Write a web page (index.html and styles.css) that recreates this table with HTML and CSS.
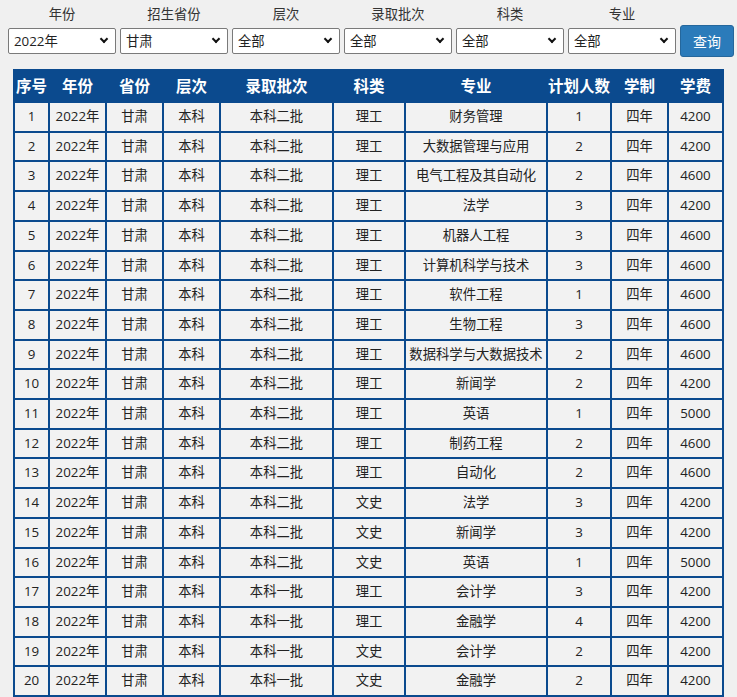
FILE: index.html
```html
<!DOCTYPE html>
<html lang="zh-CN">
<head>
<meta charset="utf-8">
<title>招生计划查询</title>
<link rel="stylesheet" href="styles.css">
</head>
<body>
<div class="filters">
  <div class="field"><label class="lbl">年份</label><span class="sel"><select><option>2022年</option></select></span></div>
  <div class="field"><label class="lbl">招生省份</label><span class="sel"><select><option>甘肃</option></select></span></div>
  <div class="field"><label class="lbl">层次</label><span class="sel"><select><option>全部</option></select></span></div>
  <div class="field"><label class="lbl">录取批次</label><span class="sel"><select><option>全部</option></select></span></div>
  <div class="field"><label class="lbl">科类</label><span class="sel"><select><option>全部</option></select></span></div>
  <div class="field"><label class="lbl">专业</label><span class="sel"><select><option>全部</option></select></span></div>
  <button class="btn">查询</button>
</div>
<table class="plan">
  <thead>
    <tr><th>序号</th><th>年份</th><th>省份</th><th>层次</th><th>录取批次</th><th>科类</th><th>专业</th><th>计划人数</th><th>学制</th><th>学费</th></tr>
  </thead>
  <tbody>
    <tr><td>1</td><td>2022年</td><td>甘肃</td><td>本科</td><td>本科二批</td><td>理工</td><td>财务管理</td><td>1</td><td>四年</td><td>4200</td></tr>
    <tr><td>2</td><td>2022年</td><td>甘肃</td><td>本科</td><td>本科二批</td><td>理工</td><td>大数据管理与应用</td><td>2</td><td>四年</td><td>4200</td></tr>
    <tr><td>3</td><td>2022年</td><td>甘肃</td><td>本科</td><td>本科二批</td><td>理工</td><td>电气工程及其自动化</td><td>2</td><td>四年</td><td>4600</td></tr>
    <tr><td>4</td><td>2022年</td><td>甘肃</td><td>本科</td><td>本科二批</td><td>理工</td><td>法学</td><td>3</td><td>四年</td><td>4200</td></tr>
    <tr><td>5</td><td>2022年</td><td>甘肃</td><td>本科</td><td>本科二批</td><td>理工</td><td>机器人工程</td><td>3</td><td>四年</td><td>4600</td></tr>
    <tr><td>6</td><td>2022年</td><td>甘肃</td><td>本科</td><td>本科二批</td><td>理工</td><td>计算机科学与技术</td><td>3</td><td>四年</td><td>4600</td></tr>
    <tr><td>7</td><td>2022年</td><td>甘肃</td><td>本科</td><td>本科二批</td><td>理工</td><td>软件工程</td><td>1</td><td>四年</td><td>4600</td></tr>
    <tr><td>8</td><td>2022年</td><td>甘肃</td><td>本科</td><td>本科二批</td><td>理工</td><td>生物工程</td><td>3</td><td>四年</td><td>4600</td></tr>
    <tr><td>9</td><td>2022年</td><td>甘肃</td><td>本科</td><td>本科二批</td><td>理工</td><td>数据科学与大数据技术</td><td>2</td><td>四年</td><td>4600</td></tr>
    <tr><td>10</td><td>2022年</td><td>甘肃</td><td>本科</td><td>本科二批</td><td>理工</td><td>新闻学</td><td>2</td><td>四年</td><td>4200</td></tr>
    <tr><td>11</td><td>2022年</td><td>甘肃</td><td>本科</td><td>本科二批</td><td>理工</td><td>英语</td><td>1</td><td>四年</td><td>5000</td></tr>
    <tr><td>12</td><td>2022年</td><td>甘肃</td><td>本科</td><td>本科二批</td><td>理工</td><td>制药工程</td><td>2</td><td>四年</td><td>4600</td></tr>
    <tr><td>13</td><td>2022年</td><td>甘肃</td><td>本科</td><td>本科二批</td><td>理工</td><td>自动化</td><td>2</td><td>四年</td><td>4600</td></tr>
    <tr><td>14</td><td>2022年</td><td>甘肃</td><td>本科</td><td>本科二批</td><td>文史</td><td>法学</td><td>3</td><td>四年</td><td>4200</td></tr>
    <tr><td>15</td><td>2022年</td><td>甘肃</td><td>本科</td><td>本科二批</td><td>文史</td><td>新闻学</td><td>3</td><td>四年</td><td>4200</td></tr>
    <tr><td>16</td><td>2022年</td><td>甘肃</td><td>本科</td><td>本科二批</td><td>文史</td><td>英语</td><td>1</td><td>四年</td><td>5000</td></tr>
    <tr><td>17</td><td>2022年</td><td>甘肃</td><td>本科</td><td>本科一批</td><td>理工</td><td>会计学</td><td>3</td><td>四年</td><td>4200</td></tr>
    <tr><td>18</td><td>2022年</td><td>甘肃</td><td>本科</td><td>本科一批</td><td>理工</td><td>金融学</td><td>4</td><td>四年</td><td>4200</td></tr>
    <tr><td>19</td><td>2022年</td><td>甘肃</td><td>本科</td><td>本科一批</td><td>文史</td><td>会计学</td><td>2</td><td>四年</td><td>4200</td></tr>
    <tr><td>20</td><td>2022年</td><td>甘肃</td><td>本科</td><td>本科一批</td><td>文史</td><td>金融学</td><td>2</td><td>四年</td><td>4200</td></tr>
  </tbody>
</table>
</body>
</html>
```
FILE: styles.css
```css
html, body {
  margin: 0;
  background: #f0f0f0;
  font-family: "Open Sans", "Noto Sans CJK SC", sans-serif;
  font-size: 13.33px;
  color: #222;
}

.filters {
  display: flex;
  align-items: flex-end;
  gap: 4px;
  padding: 5px 0 0 8px;
}

.field {
  display: flex;
  flex-direction: column;
  width: 108px;
}

.lbl {
  display: block;
  text-align: center;
  height: 19px;
  line-height: 19px;
  margin-bottom: 4px;
  color: #333;
}

.sel {
  position: relative;
  display: block;
  height: 26px;
}

.sel::after {
  content: "";
  position: absolute;
  right: 9px;
  top: 8px;
  width: 4px;
  height: 4px;
  border-right: 2px solid #111;
  border-bottom: 2px solid #111;
  transform: rotate(45deg);
  pointer-events: none;
}

.sel select {
  -webkit-appearance: none;
  appearance: none;
  box-sizing: border-box;
  width: 108px;
  height: 26px;
  margin: 0;
  padding: 0 20px 0 5px;
  border: 1px solid #7a7a7a;
  border-radius: 2px;
  background: #fff;
  font: inherit;
  color: #222;
}

.btn {
  box-sizing: border-box;
  width: 54px;
  height: 32px;
  margin: 0 0 -3px 0;
  border: 1px solid #25679c;
  border-radius: 3px;
  background: #2b7bba;
  color: #fff;
  font: inherit;
  font-size: 14px;
  padding: 0;
}

.plan {
  margin: 15px 0 0 13px;
  width: 711px;
  table-layout: fixed;
  border-collapse: separate;
  border-spacing: 2px;
  background: #0b4a8e;
}

.plan th,
.plan td {
  padding: 0;
  text-align: center;
  white-space: nowrap;
}

.plan th {
  height: 30px;
  line-height: 30px;
  color: #fff;
  font-weight: bold;
  font-size: 15.5px;
  background: #0b4a8e;
  overflow: visible;
}

.plan td {
  height: 27.7px;
  line-height: 27.7px;
  background: #f2f2f2;
  color: #222;
  overflow: hidden;
}

.plan th:nth-child(1) { width: 33px; }
.plan th:nth-child(2) { width: 55px; }
.plan th:nth-child(3) { width: 55px; }
.plan th:nth-child(4) { width: 55px; }
.plan th:nth-child(5) { width: 111px; }
.plan th:nth-child(6) { width: 70px; }
.plan th:nth-child(7) { width: 140px; }
.plan th:nth-child(8) { width: 62px; }
.plan th:nth-child(9) { width: 55px; }
.plan th:nth-child(10) { width: 53px; }
```
